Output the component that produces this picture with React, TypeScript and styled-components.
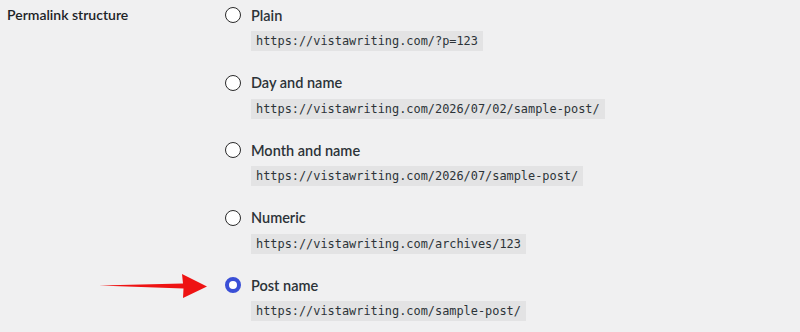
import React from "react";
import styled, { createGlobalStyle } from "styled-components";

const Global = createGlobalStyle`
  html, body { margin: 0; padding: 0; background: #f0f0f1; }
  body { width: 800px; height: 332px; overflow: hidden; }
`;

const Row = styled.div`
  display: grid;
  grid-template-columns: 218px 1fr;
  padding: 4px 0 0 7px;
  font-family: Lato, "Open Sans", sans-serif;
  color: #1d2327;
`;

const Heading = styled.div`
  font-size: 14px;
  font-weight: 600;
  line-height: 22px;
`;

const Options = styled.div`
  display: flex;
  flex-direction: column;
  gap: 20.5px;
`;

const Option = styled.div`
  position: relative;
  display: flex;
  flex-direction: column;
  align-items: flex-start;
  gap: 5px;
`;

const LabelLine = styled.label`
  display: flex;
  align-items: center;
  gap: 10px;
  height: 22px;
  font-size: 14.5px;
  font-weight: 600;
  color: #2c3338;
`;

const Radio = styled.span<{ $checked?: boolean }>`
  box-sizing: border-box;
  width: 16px;
  height: 16px;
  border-radius: 50%;
  background: #fff;
  border: ${(p) => (p.$checked ? "4.5px solid #3a4fd6" : "1.5px solid #2a2a2a")};
  flex: none;
`;

const Code = styled.code`
  margin-left: 26px;
  padding: 0 5px;
  height: 20px;
  line-height: 20px;
  background: #e3e3e4;
  font-family: "DejaVu Sans Mono", "Liberation Mono", monospace;
  font-size: 11.9px;
  color: #2c3338;
`;

const Arrow = styled.svg`
  position: absolute;
  left: -126px;
  top: 0;
`;

const items = [
  { label: "Plain", url: "https://vistawriting.com/?p=123" },
  { label: "Day and name", url: "https://vistawriting.com/2026/07/02/sample-post/" },
  { label: "Month and name", url: "https://vistawriting.com/2026/07/sample-post/" },
  { label: "Numeric", url: "https://vistawriting.com/archives/123" },
  { label: "Post name", url: "https://vistawriting.com/sample-post/", checked: true },
];

export default function App() {
  return (
    <>
      <Global />
      <Row>
        <Heading>Permalink structure</Heading>
        <Options>
          {items.map((it) => (
            <Option key={it.label}>
              {it.checked && (
                <Arrow width="110" height="26" viewBox="0 0 110 26">
                  <path d="M0 11.5 L84 9.5 L83 0 L108 12.5 L84 24 L84.5 14.5 Z" fill="#ee1313" />
                </Arrow>
              )}
              <LabelLine>
                <Radio $checked={it.checked} />
                {it.label}
              </LabelLine>
              <Code>{it.url}</Code>
            </Option>
          ))}
        </Options>
      </Row>
    </>
  );
}
